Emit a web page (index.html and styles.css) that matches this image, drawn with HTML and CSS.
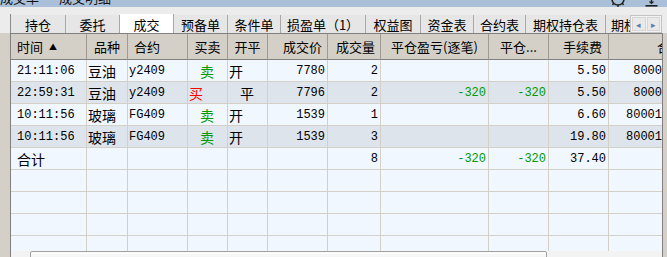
FILE: index.html
```html
<!DOCTYPE html>
<html lang="zh-CN">
<head>
    <meta charset="UTF-8">
    <meta name="viewport" content="width=device-width, initial-scale=1.0">
    <title>成交</title>
    <link rel="stylesheet" href="styles.css">
</head>
<body>
    <div class="topbar">
        <span class="top-title">成交单</span>
        <span class="top-title second">成交明细</span>
        <div class="top-icons">
            <svg class="icon-gear" width="16" height="7" viewBox="0 0 16 7">
                <circle cx="8" cy="-1" r="6" fill="none" stroke="#222" stroke-width="1.6"/>
                <path d="M8 5 L8 7 M3.5 3.5 L2.5 5 M12.5 3.5 L13.5 5" stroke="#222" stroke-width="1.4"/>
            </svg>
            <svg class="icon-down" width="13" height="7" viewBox="0 0 13 7">
                <path d="M6.5 0 L6.5 3" stroke="#222" stroke-width="1.4"/>
                <path d="M4.5 1.5 L6.5 3.5 L8.5 1.5" fill="none" stroke="#222" stroke-width="1.2"/>
                <rect x="0.5" y="5" width="12" height="1.6" fill="#222"/>
            </svg>
        </div>
    </div>

    <div class="tabbar">
        <div class="tabs">
            <div class="tab w55">持仓</div>
            <div class="tab w54">委托</div>
            <div class="tab w54 active">成交</div>
            <div class="tab w54">预备单</div>
            <div class="tab w53">条件单</div>
            <div class="tab w85">损盈单（1）</div>
            <div class="tab w55">权益图</div>
            <div class="tab w53">资金表</div>
            <div class="tab w52">合约表</div>
            <div class="tab w80">期权持仓表</div>
            <div class="tab clip">期权</div>
        </div>
        <div class="tab-arrows">
            <span class="arrow-btn">&#9666;</span>
            <span class="arrow-btn">&#9656;</span>
        </div>
    </div>

    <div class="frame">
        <div class="grid-view">
            <table class="grid">
                <colgroup>
                    <col class="c-time">
                    <col class="c-kind">
                    <col class="c-code">
                    <col class="c-side">
                    <col class="c-side">
                    <col class="c-num">
                    <col class="c-qty">
                    <col class="c-wide">
                    <col class="c-num">
                    <col class="c-num">
                    <col class="c-acct">
                </colgroup>
                <thead>
                    <tr class="head">
                        <th class="left">时间<span class="sort">&#9650;</span></th>
                        <th>品种</th>
                        <th class="left">合约</th>
                        <th>买卖</th>
                        <th>开平</th>
                        <th class="shift5">成交价</th>
                        <th class="shift2">成交量</th>
                        <th>平仓盈亏(逐笔)</th>
                        <th>平仓...</th>
                        <th class="shift4">手续费</th>
                        <th class="far">合同编号</th>
                    </tr>
                </thead>
                <tbody>
                    <tr class="row">
                        <td class="n first">21:11:06</td>
                        <td>豆油</td>
                        <td class="n">y2409</td>
                        <td class="mid sell">卖</td>
                        <td>开</td>
                        <td class="n r">7780</td>
                        <td class="n r">2</td>
                        <td></td>
                        <td></td>
                        <td class="n r">5.50</td>
                        <td class="n r">800005678</td>
                    </tr>
                    <tr class="row alt">
                        <td class="n first">22:59:31</td>
                        <td>豆油</td>
                        <td class="n">y2409</td>
                        <td class="buy">买</td>
                        <td class="mid">平</td>
                        <td class="n r">7796</td>
                        <td class="n r">2</td>
                        <td class="n r sell">-320</td>
                        <td class="n r sell">-320</td>
                        <td class="n r">5.50</td>
                        <td class="n r">800035678</td>
                    </tr>
                    <tr class="row">
                        <td class="n first">10:11:56</td>
                        <td>玻璃</td>
                        <td class="n">FG409</td>
                        <td class="mid sell">卖</td>
                        <td>开</td>
                        <td class="n r">1539</td>
                        <td class="n r">1</td>
                        <td></td>
                        <td></td>
                        <td class="n r">6.60</td>
                        <td class="n r">8000134567</td>
                    </tr>
                    <tr class="row alt">
                        <td class="n first">10:11:56</td>
                        <td>玻璃</td>
                        <td class="n">FG409</td>
                        <td class="mid sell">卖</td>
                        <td>开</td>
                        <td class="n r">1539</td>
                        <td class="n r">3</td>
                        <td></td>
                        <td></td>
                        <td class="n r">19.80</td>
                        <td class="n r">8000134568</td>
                    </tr>
                    <tr class="row">
                        <td class="first">合计</td>
                        <td></td>
                        <td></td>
                        <td></td>
                        <td></td>
                        <td></td>
                        <td class="n r">8</td>
                        <td class="n r sell">-320</td>
                        <td class="n r sell">-320</td>
                        <td class="n r">37.40</td>
                        <td></td>
                    </tr>
                    <tr class="row"><td></td><td></td><td></td><td></td><td></td><td></td><td></td><td></td><td></td><td></td><td></td></tr>
                    <tr class="row"><td></td><td></td><td></td><td></td><td></td><td></td><td></td><td></td><td></td><td></td><td></td></tr>
                    <tr class="row"><td></td><td></td><td></td><td></td><td></td><td></td><td></td><td></td><td></td><td></td><td></td></tr>
                    <tr class="row"><td></td><td></td><td></td><td></td><td></td><td></td><td></td><td></td><td></td><td></td><td></td></tr>
                </tbody>
            </table>
        </div>
        <div class="hscroll">
            <div class="sb-btn">&#9666;</div>
            <div class="sb-thumb"><span class="grip">|||</span></div>
            <div class="sb-track"></div>
            <div class="sb-btn">&#9656;</div>
        </div>
    </div>
</body>
</html>
```

FILE: styles.css
```css
body {
    margin: 0;
    width: 667px;
    height: 257px;
    overflow: hidden;
    background-color: #d4d0c8;
    font-family: "Noto Sans CJK SC", sans-serif;
    color: #000;
}

/* cut-off title strip of the panel above */
.topbar {
    height: 7px;
    background-color: #a9c0d8;
    display: flex;
    overflow: hidden;
}
.top-title {
    font-size: 13px;
    line-height: 13px;
    margin-top: -9px;
    color: #111;
    white-space: nowrap;
}
.top-title.second {
    margin-left: 20px;
}
.top-icons {
    margin-left: auto;
    padding-right: 9px;
    display: flex;
    gap: 19px;
}

/* tabs */
.tabbar {
    height: 26px;
    box-sizing: border-box;
    padding: 7px 0 0 10px;
    background-color: #ececec;
    display: flex;
}
.tabs {
    width: 620px;
    height: 19px;
    display: flex;
    align-items: flex-end;
    overflow: hidden;
    border-left: 1px solid #8c8c8c;
    box-sizing: border-box;
}
.tab {
    flex: none;
    height: 18px;
    box-sizing: border-box;
    border-right: 1px solid #a8a8a8;
    background-color: #e6e6e6;
    font-size: 13px;
    line-height: 19px;
    text-align: center;
    white-space: nowrap;
}
.tab.active {
    height: 19px;
    background-color: #fff;
    line-height: 21px;
}
.tab.clip {
    width: 25px;
    overflow: hidden;
    text-align: left;
    padding-left: 5px;
    border-right: none;
}
.w52 { width: 52px; }
.w53 { width: 53px; }
.w54 { width: 54px; }
.w55 { width: 55px; }
.w80 { width: 80px; }
.w85 { width: 85px; }

.tab-arrows {
    width: 32px;
    height: 18px;
    margin-top: 1px;
    box-sizing: border-box;
    border: 1px solid #c4c4c4;
    background-color: #f2f2f2;
    display: flex;
    gap: 1px;
    padding: 1px;
}
.arrow-btn {
    flex: 1;
    border: 1px solid #d6d6d6;
    background-color: #e9e9e9;
    color: #5f7fa8;
    font-size: 9px;
    line-height: 13px;
    text-align: center;
}

/* grid */
.frame {
    margin-left: 10px;
    width: 653px;
    height: 224px;
    box-sizing: border-box;
    border: 1px solid #808080;
    border-bottom: none;
    background-color: #f0f7ff;
}
.grid-view {
    height: 217px;
    overflow: hidden;
}
.grid {
    table-layout: fixed;
    border-collapse: separate;
    border-spacing: 0;
    width: 690px;
}
.c-time { width: 76px; }
.c-kind { width: 41px; }
.c-code { width: 60px; }
.c-side { width: 40px; }
.c-num { width: 60px; }
.c-qty { width: 53px; }
.c-wide { width: 108px; }
.c-acct { width: 92px; }

.head {
    height: 26px;
}
.grid th {
    padding: 0;
    background-color: #d4d0c8;
    border-right: 1px solid #9e9b95;
    border-bottom: 1px solid #808080;
    font-weight: normal;
    font-size: 13px;
    line-height: 16px;
    text-align: center;
    white-space: nowrap;
    overflow: hidden;
}
.grid th.left {
    text-align: left;
    padding-left: 6px;
}
.grid th.shift5 { padding-left: 10px; }
.grid th.shift2 { padding-left: 3px; }
.grid th.shift4 { padding-left: 8px; }
.grid th.far {
    text-align: left;
    padding-left: 48px;
}
.sort {
    font-size: 8px;
    margin-left: 6px;
    vertical-align: 2px;
}

.row {
    height: 22px;
    background-color: #f0f7ff;
}
.row.alt {
    background-color: #dee4eb;
}
.grid td {
    padding: 0 2px 0 1px;
    border-right: 1px solid #d4d0c8;
    border-bottom: 1px solid #d4d0c8;
    font-size: 14px;
    line-height: 16px;
    white-space: nowrap;
    overflow: hidden;
}
.grid td.n {
    font-family: "Liberation Mono", monospace;
    font-size: 12px;
}
.grid td.first {
    padding-left: 6px;
}
.grid td.r {
    text-align: right;
}
.grid td.mid {
    text-align: center;
}
.sell {
    color: #009900;
}
.buy {
    color: #ff0000;
}

/* horizontal scrollbar */
.hscroll {
    height: 17px;
    display: flex;
    background-color: #f3f3f3;
}
.sb-btn {
    width: 19px;
    flex: none;
    font-size: 9px;
    line-height: 15px;
    text-align: center;
    color: #333;
}
.sb-btn:last-child {
    width: 17px;
}
.sb-thumb {
    width: 517px;
    flex: none;
    box-sizing: border-box;
    border: 1px solid #a0a0a0;
    border-radius: 2px;
    background: linear-gradient(#fdfdfd, #e4e4e4);
    text-align: center;
}
.grip {
    font-size: 8px;
    line-height: 12px;
    color: #777;
    letter-spacing: -1px;
}
.sb-track {
    flex: 1;
}
```
